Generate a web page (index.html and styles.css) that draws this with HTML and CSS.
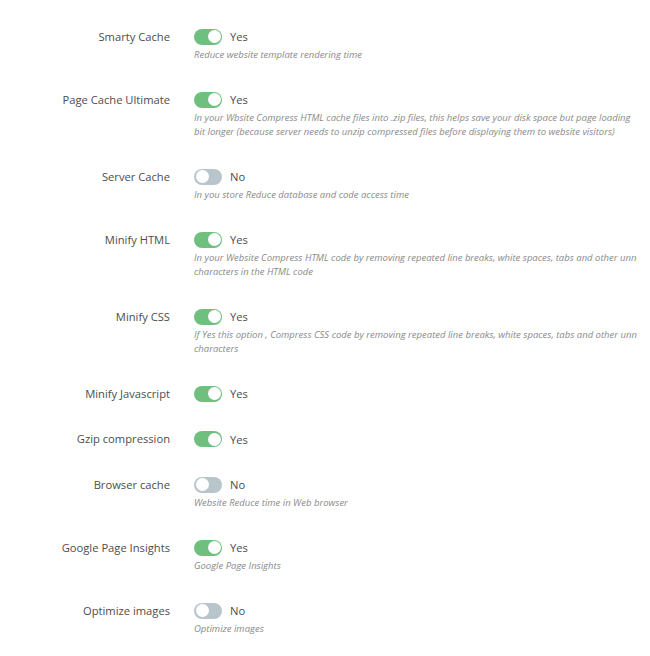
FILE: index.html
```html
<!DOCTYPE html>
<html>
<head>
<meta charset="utf-8">
<link rel="stylesheet" href="styles.css">
</head>
<body>
<div class="panel">
  <div class="row">
    <div class="label">Smarty Cache</div>
    <div class="control">
      <div class="switch-line"><span class="switch on"></span><span class="state">Yes</span></div>
      <div class="desc">Reduce website template rendering time</div>
    </div>
  </div>
  <div class="row">
    <div class="label">Page Cache Ultimate</div>
    <div class="control">
      <div class="switch-line"><span class="switch on"></span><span class="state">Yes</span></div>
      <div class="desc">In your Wbsite Compress HTML cache files into .zip files, this helps save your disk space but page loading<br>bit longer (because server needs to unzip compressed files before displaying them to website visitors)</div>
    </div>
  </div>
  <div class="row">
    <div class="label">Server Cache</div>
    <div class="control">
      <div class="switch-line"><span class="switch"></span><span class="state">No</span></div>
      <div class="desc">In you store Reduce database and code access time</div>
    </div>
  </div>
  <div class="row">
    <div class="label">Minify HTML</div>
    <div class="control">
      <div class="switch-line"><span class="switch on"></span><span class="state">Yes</span></div>
      <div class="desc">In your Website Compress HTML code by removing repeated line breaks, white spaces, tabs and other unnecessary<br>characters in the HTML code</div>
    </div>
  </div>
  <div class="row">
    <div class="label">Minify CSS</div>
    <div class="control">
      <div class="switch-line"><span class="switch on"></span><span class="state">Yes</span></div>
      <div class="desc">If Yes this option , Compress CSS code by removing repeated line breaks, white spaces, tabs and other unnecessary<br>characters</div>
    </div>
  </div>
  <div class="row">
    <div class="label">Minify Javascript</div>
    <div class="control">
      <div class="switch-line"><span class="switch on"></span><span class="state">Yes</span></div>
    </div>
  </div>
  <div class="row">
    <div class="label">Gzip compression</div>
    <div class="control">
      <div class="switch-line"><span class="switch on"></span><span class="state">Yes</span></div>
    </div>
  </div>
  <div class="row">
    <div class="label">Browser cache</div>
    <div class="control">
      <div class="switch-line"><span class="switch"></span><span class="state">No</span></div>
      <div class="desc">Website Reduce time in Web browser</div>
    </div>
  </div>
  <div class="row">
    <div class="label">Google Page Insights</div>
    <div class="control">
      <div class="switch-line"><span class="switch on"></span><span class="state">Yes</span></div>
      <div class="desc">Google Page Insights</div>
    </div>
  </div>
  <div class="row">
    <div class="label">Optimize images</div>
    <div class="control">
      <div class="switch-line"><span class="switch"></span><span class="state">No</span></div>
      <div class="desc">Optimize images</div>
    </div>
  </div>
</div>
</body>
</html>
```
FILE: styles.css
```css
html, body {
  margin: 0;
  padding: 0;
  background: #ffffff;
}
body {
  font-family: "Open Sans", "DejaVu Sans", sans-serif;
  color: #555555;
}
.panel {
  width: 637px;
  overflow: hidden;
  padding-top: 26.5px;
  display: flex;
  flex-direction: column;
  gap: 25.5px;
}
.row {
  display: grid;
  grid-template-columns: 170px 1fr;
  column-gap: 24px;
  align-items: start;
}
.label {
  text-align: right;
  font-size: 11.2px;
  line-height: 20px;
  color: #4d4d4d;
  white-space: nowrap;
}
.control {
  min-width: 0;
}
.switch-line {
  display: flex;
  align-items: center;
  height: 20px;
  gap: 8px;
}
.switch {
  position: relative;
  width: 28px;
  height: 16px;
  border-radius: 8px;
  background: #b8c6cc;
  flex: none;
}
.switch::after {
  content: "";
  position: absolute;
  top: 1.5px;
  left: 1.5px;
  width: 13px;
  height: 13px;
  border-radius: 50%;
  background: #ffffff;
}
.switch.on {
  background: #6fc07f;
}
.switch.on::after {
  left: 13.5px;
}
.state {
  font-size: 11.2px;
  color: #4d4d4d;
}
.desc {
  margin-top: 1.5px;
  margin-bottom: 2px;
  font-size: 9.5px;
  line-height: 14px;
  font-style: italic;
  color: #8a8a8a;
  white-space: nowrap;
}
```
